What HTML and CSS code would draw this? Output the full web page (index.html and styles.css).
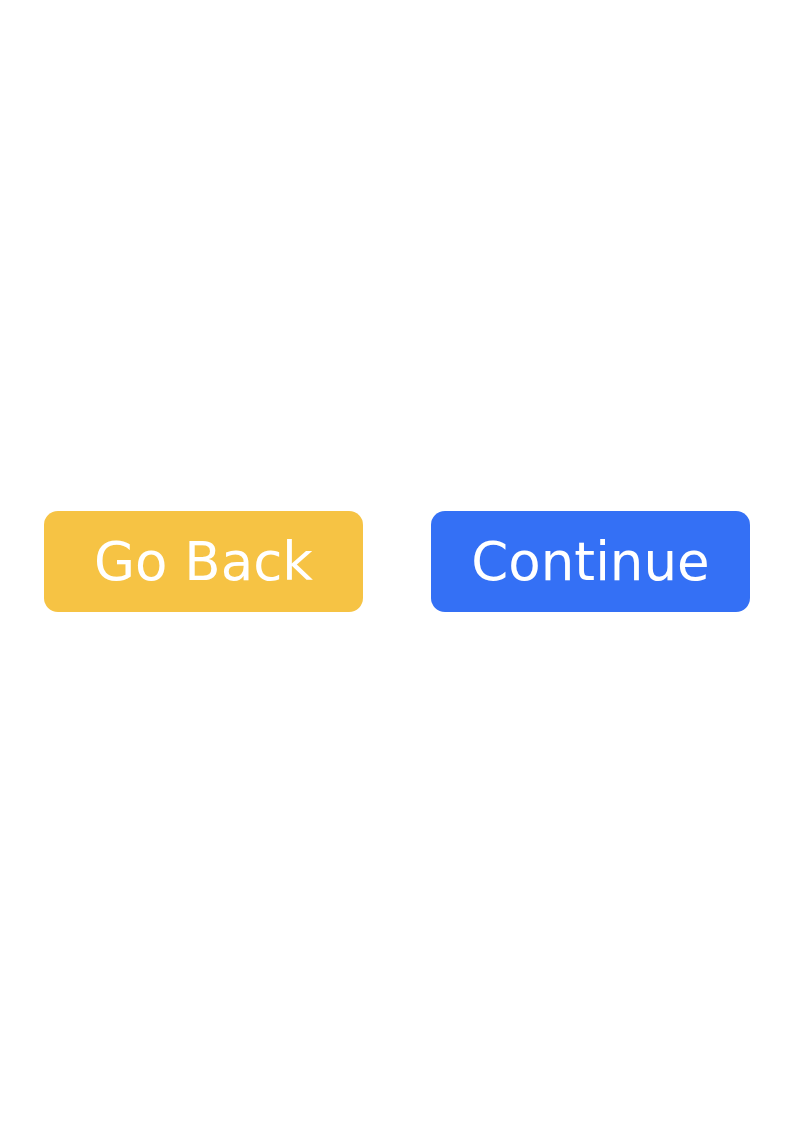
FILE: index.html
```html
<!DOCTYPE html>
<html>
<head>
<meta charset="utf-8">
<link rel="stylesheet" href="styles.css">
</head>
<body>
<div class="page">
  <div class="actions">
    <button class="btn btn-back">Go Back</button>
    <button class="btn btn-continue">Continue</button>
  </div>
</div>
</body>
</html>
```
FILE: styles.css
```css
html, body {
  margin: 0;
  padding: 0;
  background: #ffffff;
}
.page {
  width: 794px;
  height: 1123px;
  display: flex;
  align-items: center;
  justify-content: center;
}
.actions {
  display: flex;
  gap: 68px;
}
.btn {
  width: 319px;
  height: 101px;
  border: none;
  border-radius: 14px;
  color: #ffffff;
  font-family: "DejaVu Sans", sans-serif;
  font-size: 53px;
  padding: 0;
  display: flex;
  align-items: center;
  justify-content: center;
}
.btn-back {
  background: #f6c344;
}
.btn-continue {
  background: #3470f5;
}
```
